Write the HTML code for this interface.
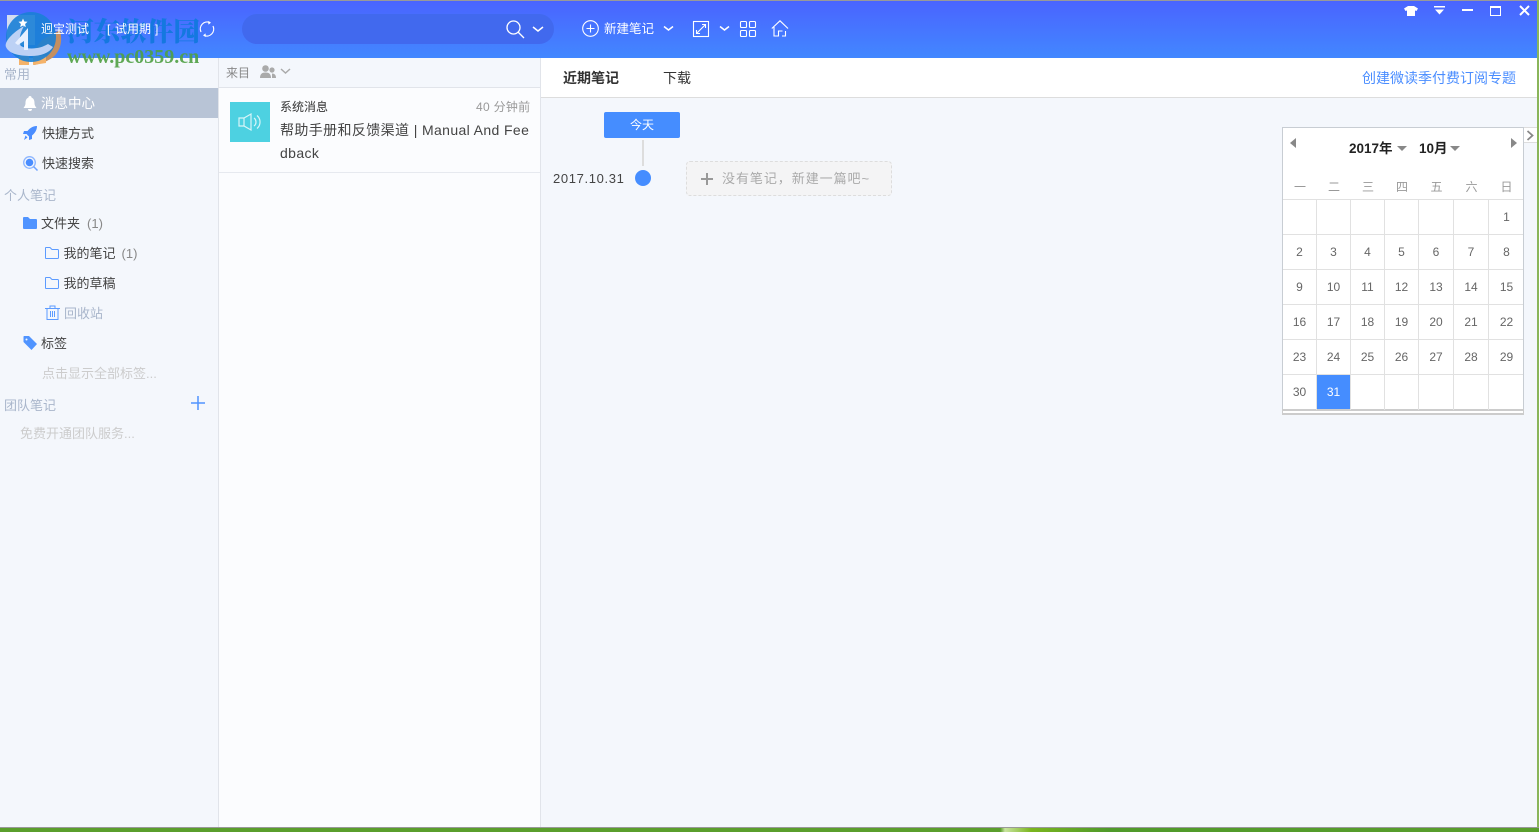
<!DOCTYPE html>
<html lang="zh"><head><meta charset="utf-8"><title>笔记</title>
<style>
html,body{margin:0;padding:0;width:1539px;height:832px;overflow:hidden;background:#f4f7fc}
body{position:relative;font-family:"Liberation Sans","Noto Sans CJK SC",sans-serif;font-size:13px;color:#444}
.a{position:absolute;white-space:nowrap;line-height:18px}
svg{position:absolute;overflow:visible}
.g{color:#a9b6cb}.l{color:#ccc}
.c{position:absolute;text-align:center;font-size:12px;color:#666;line-height:16px}
</style></head><body>

<!-- top bar -->
<div class="a" style="left:0;top:0;width:1537px;height:58px;background:linear-gradient(#4a64ff,#4287ff);border-top:1px solid #999;box-sizing:border-box"></div>
<div class="a" style="left:1537px;top:0;width:2px;height:832px;background:#8ab55a"></div>
<div class="a" style="left:242px;top:14px;width:312px;height:30px;border-radius:15px;background:#4169ee"></div>

<svg style="left:198px;top:20px" width="18" height="18" fill="none" stroke="#fff" stroke-width="1.2"><path d="M3 12A7 7 0 0 1 12 2.500M15 6A7 7 0 0 1 6 15.500"/><path d="M10 1l3 1.600-2.500 2M8 17l-3-1.600 2.500-2" fill="#fff" stroke="none"/></svg>

<svg style="left:506px;top:20px" width="40" height="18" fill="none" stroke="#fff" stroke-width="1.3"><circle cx="7.500" cy="7.500" r="6.500"/><path d="M12 12l6 6"/><path d="M27 7l5 4 5-4" stroke-width="1.500"/></svg>
<svg style="left:582px;top:20px" width="17" height="17" fill="none" stroke="#fff" stroke-width="1.100"><circle cx="8.500" cy="8.500" r="7.800"/><path d="M4.500 8.500h8M8.500 4.500v8"/></svg>
<div class="a" style="left:604px;top:20px;color:#fff;font-size:12.500px">新建笔记</div>
<svg style="left:663px;top:25px" width="11" height="8" fill="none" stroke="#fff" stroke-width="1.500"><path d="M1 1.500l4.500 3.500 4.500-3.500"/></svg>
<svg style="left:693px;top:21px" width="16" height="16" fill="none" stroke="#fff" stroke-width="1.100"><rect x=".5" y=".5" width="15" height="15"/><path d="M4 12l8-8M9 3.500h3.500V7M3.500 9v3.500H7"/></svg>
<svg style="left:719px;top:25px" width="11" height="8" fill="none" stroke="#fff" stroke-width="1.500"><path d="M1 1.500l4.500 3.500 4.500-3.500"/></svg>
<svg style="left:740px;top:21px" width="16" height="16" fill="none" stroke="#fff" stroke-width="1.100"><rect x=".5" y=".5" width="6" height="6" rx="1"/><rect x="9.500" y=".5" width="6" height="6" rx="1"/><rect x=".5" y="9.500" width="6" height="6" rx="1"/><rect x="9.500" y="9.500" width="6" height="6" rx="1"/></svg>
<svg style="left:771px;top:20px" width="18" height="17" fill="none" stroke="#fff" stroke-width="1.100"><path d="M.8 8.500L9 .8l8 7.700M3 7v9h4.500v-5h4M14.500 11v5H11"/></svg>

<!-- window controls -->
<svg style="left:1404px;top:6px" width="14" height="10" fill="#fff"><path d="M4 0h6l4 2.500-1.500 2.500-1.500-.5V10H3V4.500L1.500 5 0 2.500z"/></svg>
<svg style="left:1434px;top:6px" width="12" height="9" fill="#fff"><path d="M0 0h11v1.500H0zM1 3.500h9L5.500 8.500z"/></svg>
<div class="a" style="left:1462px;top:9px;width:11px;height:2px;background:#fff"></div>
<div class="a" style="left:1490px;top:6px;width:9px;height:7px;border:1px solid #fff;border-top-width:2px"></div>
<svg style="left:1519px;top:5px" width="11" height="11" fill="none" stroke="#fff" stroke-width="2"><path d="M1 1l9 9M10 1l-9 9"/></svg>

<!-- sidebar -->
<div class="a" style="left:0;top:58px;width:219px;height:769px;background:#f4f7fc;border-right:1px solid #e1e4ea;box-sizing:border-box"></div>
<div class="a" style="left:0;top:88px;width:218px;height:30px;background:#b8c4d6"></div>
<div class="a g" style="left:4px;top:66px">常用</div>
<svg style="left:23px;top:96px" width="14" height="15" fill="#fff"><path d="M7 0a1.500 1.500 0 0 1 1.500 1.500C11 2.500 11.500 5 11.500 7c0 2.500 1 3.500 2 5H.5c1-1.500 2-2.500 2-5 0-2 .5-4.500 3-5.500A1.500 1.500 0 0 1 7 0zM5 13h4a2 2 0 0 1-4 0z"/></svg>
<div class="a" style="left:41px;top:95px;color:#fff;font-size:13.500px">消息中心</div>
<svg style="left:23px;top:126px" width="14" height="14" fill="#4a8dff"><path d="M14 0c0 4-2 7-5 9.500V13l-3 1V10.500L3.500 8H0l1-3h3.500C7 2 10 0 14 0zM2.500 9.500l2 2L1 14z"/></svg>
<div class="a" style="left:42px;top:125px">快捷方式</div>
<svg style="left:23px;top:156px" width="15" height="15"><circle cx="6.500" cy="6.500" r="3.800" fill="#4a8dff"/><circle cx="6.500" cy="6.500" r="5.800" fill="none" stroke="#8db6ff" stroke-width="1.300"/><path d="M10.500 10.500l4 4" stroke="#6ea2ff" stroke-width="1.500"/></svg>
<div class="a" style="left:42px;top:155px">快速搜索</div>
<div class="a g" style="left:4px;top:187px">个人笔记</div>
<svg style="left:23px;top:217px" width="14" height="12" fill="#5094ff"><path d="M1 0h4l2 2h6a1 1 0 0 1 1 1v8a1 1 0 0 1-1 1H1a1 1 0 0 1-1-1V1a1 1 0 0 1 1-1z"/></svg>
<div class="a" style="left:41px;top:215px">文件夹<span style="color:#888;margin-left:7px">(1)</span></div>
<svg style="left:45px;top:247px" width="14" height="12" fill="none" stroke="#5c9bff"><path d="M1 .5h4l2 2h5.500a1 1 0 0 1 1 1v7a1 1 0 0 1-1 1h-11.500a.5.500 0 0 1-.5-.5V1a.5.500 0 0 1 .5-.5z"/></svg>
<div class="a" style="left:63.500px;top:245px">我的笔记<span style="color:#888;margin-left:6px">(1)</span></div>
<svg style="left:45px;top:277px" width="14" height="12" fill="none" stroke="#5c9bff"><path d="M1 .5h4l2 2h5.500a1 1 0 0 1 1 1v7a1 1 0 0 1-1 1h-11.500a.5.500 0 0 1-.5-.5V1a.5.500 0 0 1 .5-.5z"/></svg>
<div class="a" style="left:63.500px;top:275px">我的草稿</div>
<svg style="left:45px;top:305px" width="15" height="15" fill="none" stroke="#5c9bff"><path d="M0 3.500h15M5 3.500V1h5v2.500M2 3.500V14.500h11V3.500M5.500 6v6M7.500 6v6M9.500 6v6"/></svg>
<div class="a g" style="left:64px;top:305px">回收站</div>
<svg style="left:23px;top:336px" width="14" height="14" fill="#5094ff"><path d="M1 0h5l8 8-5.500 6L.5 6V1a1 1 0 0 1 .5-1z"/><circle cx="3.500" cy="3.500" r="1" fill="#f4f7fc"/></svg>
<div class="a" style="left:41px;top:335px">标签</div>
<div class="a l" style="left:42px;top:365px">点击显示全部标签...</div>
<div class="a g" style="left:4px;top:397px">团队笔记</div>
<svg style="left:191px;top:396px" width="14" height="14" stroke="#5094ff" stroke-width="1.500"><path d="M0 7h14M7 0v14"/></svg>
<div class="a l" style="left:20px;top:425px">免费开通团队服务...</div>

<!-- list column -->
<div class="a" style="left:219px;top:58px;width:322px;height:769px;background:#fbfcfe;border-right:1px solid #e1e4ea;box-sizing:border-box"></div>
<div class="a" style="left:219px;top:58px;width:321px;height:30px;background:#f4f7fc;border-bottom:1px solid #e1e4ea;box-sizing:border-box"></div>
<div class="a" style="left:226px;top:64px;color:#888;font-size:12px">来目</div>
<svg style="left:260px;top:65px" width="32" height="14" fill="#aaa"><circle cx="5.500" cy="3.500" r="3.300"/><path d="M0 13c0-4 2-5.500 5.500-5.500S11 9 11 13z"/><circle cx="12" cy="5" r="2.600"/><path d="M12 8.500c2.500 0 4 1.500 4 4.500h-4z"/><path d="M21 4l4.500 4 4.500-4" fill="none" stroke="#aaa" stroke-width="1.500"/></svg>
<div class="a" style="left:219px;top:172px;width:321px;height:1px;background:#e6e9ef"></div>
<div class="a" style="left:230px;top:102px;width:40px;height:40px;background:#4dd1e1"></div>
<svg style="left:238px;top:113px" width="25" height="18" fill="none" stroke="#d8f5f8" stroke-width="1.200"><path d="M1 5h5l7-4v16l-7-4H1zM6 5v8M16 5a5 5 0 0 1 0 8M19 2.500a8.500 8.500 0 0 1 0 13"/></svg>
<div class="a" style="left:280px;top:98px;font-size:12px;color:#333">系统消息</div>
<div class="a" style="left:476px;top:98px;font-size:12px;color:#999;letter-spacing:.3px">40 分钟前</div>
<div class="a" style="left:280px;top:121px;font-size:14px;color:#444;letter-spacing:.38px">帮助手册和反馈渠道 | Manual And Fee</div>
<div class="a" style="left:280px;top:144px;font-size:14px;color:#444;letter-spacing:.38px">dback</div>

<!-- main -->
<div class="a" style="left:541px;top:58px;width:996px;height:40px;background:#fff;border-bottom:1px solid #ddd;box-sizing:border-box"></div>
<div class="a" style="left:563px;top:69px;color:#333;font-weight:bold;font-size:14px">近期笔记</div>
<div class="a" style="left:663px;top:69px;color:#333;font-size:14px">下载</div>
<div class="a" style="left:1362px;top:69px;color:#4a8dff;font-size:14px">创建微读季付费订阅专题</div>

<div class="a" style="left:604px;top:112px;width:76px;height:26px;line-height:26px;background:#458dff;border-radius:2px;color:#fff;text-align:center;font-size:12px">今天</div>
<div class="a" style="left:642px;top:140px;width:2px;height:26px;background:#ddd"></div>
<div class="a" style="left:553px;top:170px;color:#444;letter-spacing:.65px">2017.10.31</div>
<div class="a" style="left:635px;top:170px;width:16px;height:16px;border-radius:50%;background:#458dff"></div>
<div class="a" style="left:686px;top:161px;width:206px;height:35px;box-sizing:border-box;background:#f4f4f5;border:1px dashed #ddd;border-radius:4px"></div>
<svg style="left:701px;top:173px" width="12" height="12" stroke="#999" stroke-width="2"><path d="M0 6h12M6 0v12"/></svg>
<div class="a" style="left:722px;top:170px;color:#aaa;letter-spacing:.95px">没有笔记，新建一篇吧~</div>

<!-- calendar -->
<div class="a" style="left:1282px;top:127px;width:242px;height:283px;background:#fff;border:1px solid #c8cdd3;border-bottom:0;box-sizing:border-box"></div>
<div class="a" style="left:1282px;top:409px;width:242px;height:6px;background:#fff;border:1px solid #ccc;border-width:2px 1px 2px;box-sizing:border-box"></div>
<div class="a" style="left:1524px;top:127px;width:13px;height:16px;background:#fff;border-bottom:1px solid #ddd;border-top:1px solid #ddd;box-sizing:border-box"></div>
<svg style="left:1526px;top:130px" width="9" height="11" fill="none" stroke="#888" stroke-width="1.800"><path d="M1.500 1l5 4.500-5 4.500"/></svg>
<svg style="left:1290px;top:138px" width="7" height="10" fill="#888"><path d="M6 0v10L0 5z"/></svg>
<svg style="left:1511px;top:138px" width="7" height="10" fill="#888"><path d="M0 0v10l6-5z"/></svg>
<div class="a" style="left:1349px;top:140px;color:#222;font-weight:bold;font-size:13.500px">2017年</div>
<svg style="left:1397px;top:146px" width="10" height="6" fill="#888"><path d="M0 0h10L5 5z"/></svg>
<div class="a" style="left:1419px;top:140px;color:#222;font-weight:bold;font-size:13.500px">10月</div>
<svg style="left:1450px;top:146px" width="10" height="6" fill="#888"><path d="M0 0h10L5 5z"/></svg>
<div class="c" style="left:1283px;top:179px;width:34px;color:#999">一</div>
<div class="c" style="left:1317px;top:179px;width:34px;color:#999">二</div>
<div class="c" style="left:1351px;top:179px;width:34px;color:#999">三</div>
<div class="c" style="left:1385px;top:179px;width:34px;color:#999">四</div>
<div class="c" style="left:1419px;top:179px;width:35px;color:#999">五</div>
<div class="c" style="left:1454px;top:179px;width:35px;color:#999">六</div>
<div class="c" style="left:1489px;top:179px;width:35px;color:#999">日</div>

<svg style="left:0;top:0" width="1539" height="832" stroke="#e1e1e1" stroke-width="1"><path d="M1283 199.500h240M1283 234.500h240M1283 269.500h240M1283 304.500h240M1283 339.500h240M1283 374.500h240M1316.500 199v211M1350.500 199v211M1384.500 199v211M1418.500 199v211M1453.500 199v211M1488.500 199v211"/></svg>
<div class="a" style="left:1317px;top:375px;width:33px;height:34px;background:#458dff"></div>

<div class="c" style="left:1489px;top:209px;width:35px">1</div>
<div class="c" style="left:1283px;top:244px;width:33px">2</div><div class="c" style="left:1317px;top:244px;width:33px">3</div><div class="c" style="left:1351px;top:244px;width:33px">4</div><div class="c" style="left:1385px;top:244px;width:33px">5</div><div class="c" style="left:1419px;top:244px;width:34px">6</div><div class="c" style="left:1454px;top:244px;width:34px">7</div><div class="c" style="left:1489px;top:244px;width:35px">8</div>
<div class="c" style="left:1283px;top:279px;width:33px">9</div><div class="c" style="left:1317px;top:279px;width:33px">10</div><div class="c" style="left:1351px;top:279px;width:33px">11</div><div class="c" style="left:1385px;top:279px;width:33px">12</div><div class="c" style="left:1419px;top:279px;width:34px">13</div><div class="c" style="left:1454px;top:279px;width:34px">14</div><div class="c" style="left:1489px;top:279px;width:35px">15</div>
<div class="c" style="left:1283px;top:314px;width:33px">16</div><div class="c" style="left:1317px;top:314px;width:33px">17</div><div class="c" style="left:1351px;top:314px;width:33px">18</div><div class="c" style="left:1385px;top:314px;width:33px">19</div><div class="c" style="left:1419px;top:314px;width:34px">20</div><div class="c" style="left:1454px;top:314px;width:34px">21</div><div class="c" style="left:1489px;top:314px;width:35px">22</div>
<div class="c" style="left:1283px;top:349px;width:33px">23</div><div class="c" style="left:1317px;top:349px;width:33px">24</div><div class="c" style="left:1351px;top:349px;width:33px">25</div><div class="c" style="left:1385px;top:349px;width:33px">26</div><div class="c" style="left:1419px;top:349px;width:34px">27</div><div class="c" style="left:1454px;top:349px;width:34px">28</div><div class="c" style="left:1489px;top:349px;width:35px">29</div>
<div class="c" style="left:1283px;top:384px;width:33px">30</div><div class="c" style="left:1317px;top:384px;width:33px;color:#fff">31</div>

<!-- desktop strip -->
<div class="a" style="left:0;top:827px;width:1539px;height:5px;border-top:1px solid #999;box-sizing:border-box;background:linear-gradient(90deg,#5a9e2c 0,#5a9e2c 65%,#c9e4a0 65.300%,#7ab51e 67%,#4f9a2a 72%,#5a9e2c 100%)"></div>

<!-- watermark -->
<svg style="left:0;top:0" width="70" height="70">
<rect x="7" y="15" width="28" height="30" fill="#d4ddf0"/>
<path d="M42 40C50 36 56 32 60 30C63 42 60 52 52 58C46 62 40 64 34 65L32 52z" fill="#c48f60"/>
<path d="M19 56h10v9H19zM33 56h13v7l-13 2z" fill="#f5b36a"/>
<circle cx="31" cy="37" r="25" fill="#1a7fd6" opacity=".9"/>
<path d="M24 26C12 33 4 42 6 47c3 7 14 9 25 9 10 0 18-3 22-9l-5-3c-8 5-20 6-27 2-3-4-1-13 3-20z" fill="#bcd1f5"/>
<path d="M15 43L28 28V50H24V41L18 45z" fill="#e8f0ff"/>
<path d="M23 18.500l1.300 3 3.200.3-2.400 2.200.7 3.100-2.800-1.600-2.800 1.600.7-3.100-2.400-2.200 3.200-.3z" fill="#fff"/>
</svg>
<div class="a" style="left:67px;top:13px;font:900 26.600px/34px 'Noto Serif CJK SC',serif;color:#1478e0">河东软件园</div>
<div class="a" style="left:67px;top:47px;font:bold 20px/20px 'Liberation Serif',serif;color:#4fa044;opacity:.9">www.pc0359.cn</div>

<!-- top-bar labels sit above the watermark -->
<div class="a" style="left:41px;top:20px;color:#fff;font-size:12px">迥宝测试</div>
<div class="a" style="left:107px;top:20px;color:#fff;font-size:12px">[</div>
<div class="a" style="left:115px;top:20px;color:#fff;font-size:12px">试用期</div>
<div class="a" style="left:155px;top:20px;color:#fff;font-size:12px">]</div>
</body></html>
